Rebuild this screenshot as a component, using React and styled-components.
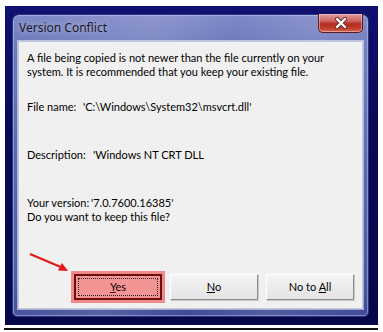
import React from "react";
import styled, { createGlobalStyle } from "styled-components";

const Global = createGlobalStyle`
  html, body { margin: 0; padding: 0; background: #ffffff; }
  body { font-family: Lato, "Noto Sans", sans-serif; }
`;

const Page = styled.div`
  width: 383px;
  height: 332px;
  padding: 6px 5px 0 5px;
  box-sizing: border-box;
  display: flex;
  flex-direction: column;
`;

const Backdrop = styled.div`
  width: 373px;
  height: 319px;
  box-sizing: border-box;
  padding: 8px 9px 8px 7px;
  background: linear-gradient(180deg, #101070 0%, #0a0a55 40%, #07074a 100%);
  display: flex;
`;

const BottomRule = styled.div`
  margin-top: 3px;
  height: 2px;
  width: 374px;
  margin-left: -1px;
  background: #111;
`;

const Frame = styled.div`
  flex: 1;
  border-radius: 7px 7px 5px 5px;
  border: 1px solid #2b3580;
  box-shadow: inset 0 0 0 1px rgba(200, 210, 255, 0.45);
  background:
    linear-gradient(100deg, rgba(255,255,255,0) 0%, rgba(255,255,255,0.12) 35%, rgba(255,255,255,0) 55%, rgba(255,255,255,0.10) 75%, rgba(255,255,255,0) 100%),
    linear-gradient(180deg, #7e88c8 0%, #6e79bb 10%, #5664ac 50%, #4b58a2 85%, #3e4b96 100%);
  display: flex;
  flex-direction: column;
  padding: 0 5px 7px 5px;
`;

const TitleBar = styled.div`
  height: 26px;
  display: flex;
  align-items: flex-start;
  justify-content: space-between;
`;

const Title = styled.div`
  margin-top: 6px;
  padding-left: 1px;
  font-family: "Noto Sans", "Open Sans", sans-serif;
  font-size: 12px;
  line-height: 14px;
  color: #1a1a2a;
  text-shadow: 0 0 6px rgba(255,255,255,0.6);
`;

const CloseButton = styled.div`
  width: 45px;
  height: 19px;
  box-sizing: border-box;
  margin-top: -1px;
  border: 1px solid #5a1c1c;
  border-top: none;
  border-radius: 0 0 5px 5px;
  background: linear-gradient(180deg, #e0a0a0 0%, #d06060 40%, #b32c20 55%, #c0402e 80%, #d86a50 100%);
  box-shadow: inset 0 0 0 1px rgba(255,220,220,0.45);
  display: flex;
  align-items: center;
  justify-content: center;
`;

const Content = styled.div`
  flex: 1;
  background: #f0f0f0;
  border: 1px solid #c3c9dd;
  box-shadow: 0 0 0 1px rgba(255,255,255,0.5);
  padding: 9px 8px 0 8px;
  display: flex;
  flex-direction: column;
  font-family: Lato, "Noto Sans", sans-serif;
  font-size: 11px;
  line-height: 14px;
  color: #000;
`;

const Para = styled.div`
  margin-top: ${(p) => p.$gap || 0}px;
  white-space: nowrap;
`;

const Field = styled.div`
  margin-top: ${(p) => p.$gap || 0}px;
  display: flex;
  white-space: nowrap;
`;

const Label = styled.span`
  width: ${(p) => p.$w}px;
  flex: none;
`;

const ButtonRow = styled.div`
  margin-top: ${(p) => p.$gap}px;
  display: flex;
  justify-content: flex-end;
  gap: 8px;
`;

const Button = styled.div`
  width: 88px;
  height: 26px;
  box-sizing: border-box;
  display: flex;
  align-items: center;
  justify-content: center;
  font-size: 11px;
  color: #000;
  background: linear-gradient(180deg, #f4f4f4 0%, #ececec 50%, #e4e4e4 100%);
  border-top: 1px solid #ffffff;
  border-left: 1px solid #ffffff;
  border-right: 1px solid #8e8e8e;
  border-bottom: 1px solid #8e8e8e;
  box-shadow: 1px 1px 0 #c9c9c9;
`;

const HighlightWrap = styled.div`
  padding: 3px;
  margin: -3px;
  background: #f08a8a;
  position: relative;
`;

const YesButton = styled.div`
  width: 88px;
  height: 26px;
  box-sizing: border-box;
  border: 2px solid #6e0e0e;
  background: #f29494;
  padding: 2px;
  display: flex;
`;

const Focus = styled.div`
  flex: 1;
  border: 1px dotted #222;
  display: flex;
  align-items: center;
  justify-content: center;
  font-size: 11px;
  color: #200;
`;

const U = styled.span`
  text-decoration: underline;
`;

const Arrow = styled.svg`
  position: absolute;
  left: -41px;
  top: -18px;
  overflow: visible;
`;

export default function App() {
  return (
    <>
      <Global />
      <Page>
        <Backdrop>
          <Frame>
            <TitleBar>
              <Title>Version Conflict</Title>
              <CloseButton>
                <svg width="14" height="12" viewBox="0 0 14 12">
                  <path d="M3 2 L11 10 M11 2 L3 10" stroke="#6a2a2a" strokeWidth="4" strokeLinecap="round" />
                  <path d="M3 2 L11 10 M11 2 L3 10" stroke="#ffffff" strokeWidth="2.4" strokeLinecap="round" />
                </svg>
              </CloseButton>
            </TitleBar>
            <Content>
              <Para>A file being copied is not newer than the file currently on your</Para>
              <Para>system. It is recommended that you keep your existing file.</Para>
              <Field $gap={21}>
                <Label $w={56}>File name:</Label>
                <span>'C:\Windows\System32\msvcrt.dll'</span>
              </Field>
              <Field $gap={34}>
                <Label $w={66}>Description:</Label>
                <span>'Windows NT CRT DLL</span>
              </Field>
              <Field $gap={34}>
                <Label $w={64}>Your version:</Label>
                <span>'7.0.7600.16385'</span>
              </Field>
              <Para>Do you want to keep this file?</Para>
              <ButtonRow $gap={50}>
                <HighlightWrap>
                  <Arrow width="40" height="20" viewBox="0 0 40 20">
                    <path d="M0 1 L33 15" stroke="#e01818" strokeWidth="2" />
                    <path d="M38 18 L28 17.5 L32 10 Z" fill="#e01818" />
                  </Arrow>
                  <YesButton>
                    <Focus><span><U>Y</U>es</span></Focus>
                  </YesButton>
                </HighlightWrap>
                <Button><span><U>N</U>o</span></Button>
                <Button><span>No to <U>A</U>ll</span></Button>
              </ButtonRow>
            </Content>
          </Frame>
        </Backdrop>
        <BottomRule />
      </Page>
    </>
  );
}
